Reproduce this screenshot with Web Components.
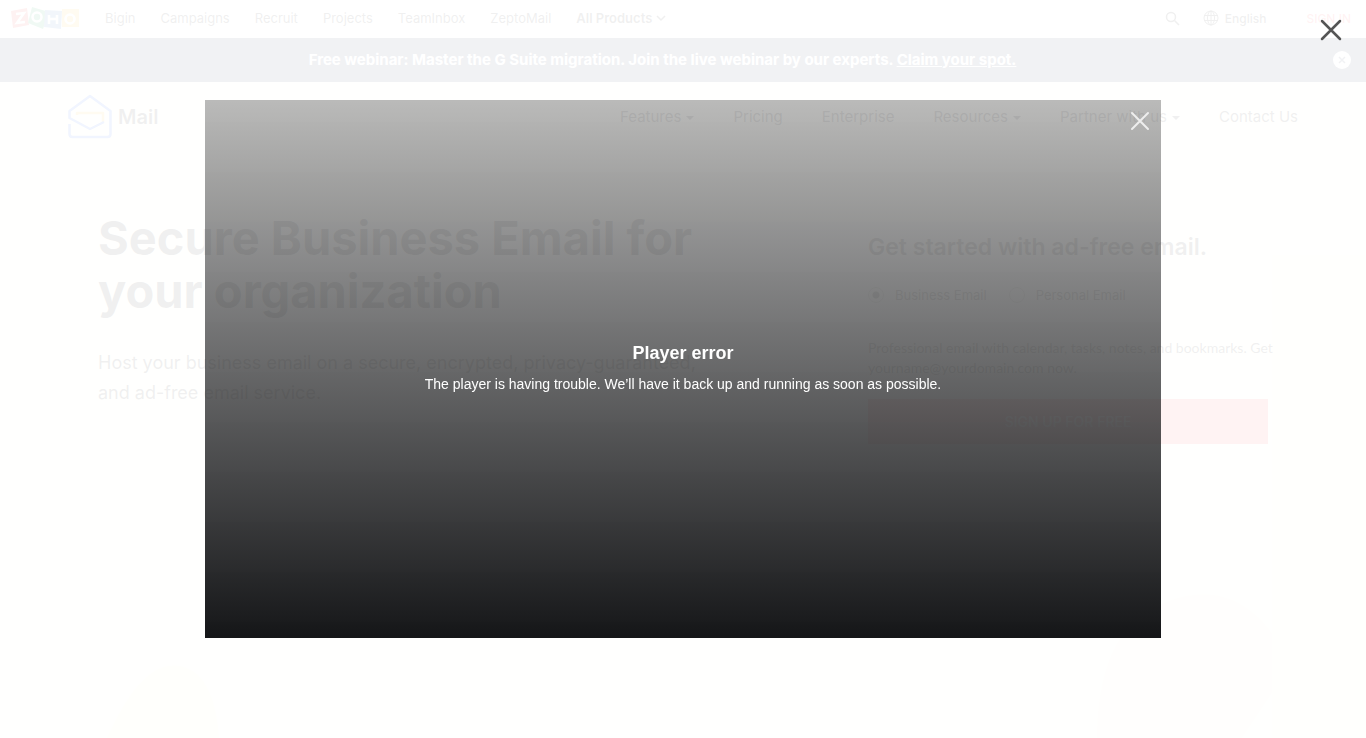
<!DOCTYPE html>
<html lang="en">
<head>
<meta charset="utf-8">
<title>Zoho Mail</title>
<style>
  html, body {
    margin: 0;
    height: 100%;
    overflow: hidden;
  }
  body {
    font-family: Inter, "Open Sans", sans-serif;
    color: #000;
    background: #ffffe4;
  }
</style>
</head>
<body>
<hero-art></hero-art>
<mail-topbar></mail-topbar>
<promo-banner>
  Free webinar: Master the G Suite migration. Join the live webinar by our experts.
  <a slot="action" href="#webinar">Claim your spot.</a>
</promo-banner>
<site-header></site-header>
<hero-section>
  <span slot="title">Secure Business Email for your organization</span>
  <span slot="text">Host your business email on a secure, encrypted, privacy-guaranteed, and ad-free email service.</span>
  <signup-form></signup-form>
</hero-section>
<video-modal>
  <player-error heading="Player error">The player is having trouble. We’ll have it back up and running as soon as possible.</player-error>
</video-modal>

<script>
// Pale shapes behind the page content
class HeroArt extends HTMLElement {
  constructor() {
    super();
    this.attachShadow({ mode: "open" });
    this.shadowRoot.innerHTML = `
      <style>
        :host {
          position: absolute;
          inset: 0;
          z-index: -1;
          display: flex;
          align-items: flex-end;
          justify-content: space-between;
          padding-left: 107px;
        }
        svg { display: block; }
      </style>
      <svg width="114" height="73" viewBox="0 0 114 73">
        <path d="M0 73C14 44 28 18 48 6c20-11 42-4 52 17 8 15 10 30 12 50z" fill="#fff0c0"/>
      </svg>
      <svg width="269" height="483" viewBox="0 0 269 483">
        <path d="M175 0h94v483h-94z" fill="#fff4d8"/>
        <path d="M0 483C0 420 18 368 62 350c40-18 80-16 113 28v60l-30 45z" fill="#ffeed8"/>
      </svg>`;
  }
}

class MailTopbar extends HTMLElement {
  constructor() {
    super();
    this.attachShadow({ mode: "open" });
    this.shadowRoot.innerHTML = `
      <style>
        :host {
          display: flex;
          align-items: center;
          justify-content: space-between;
          box-sizing: border-box;
          height: 38px;
          padding: 0 15px 2px 10px;
          background: #fff;
          font-size: 13px;
        }
        nav, .tools { display: flex; align-items: center; }
        nav { gap: 25px; }
        a { color: inherit; text-decoration: none; }
        svg { display: block; }
        .all { display: flex; align-items: center; gap: 4px; font-weight: 600; }
        button {
          display: flex;
          align-items: center;
          gap: 6px;
          padding: 0;
          border: 0;
          background: none;
          font: inherit;
          color: inherit;
        }
        .lang { margin-left: 23px; font-size: 12px; font-weight: 500; }
        .signin { margin-left: 40px; color: #f0373a; font-size: 12px; font-weight: 500; }
      </style>
      <nav>
        <a href="#home" aria-label="Zoho">
          <svg width="70" height="24" viewBox="0 0 70 24" fill="none">
            <path d="M1 5l16-3 2 17-16 3z" fill="#e42527"/>
            <path d="M22 1l17 5-6 17-15-6z" fill="#089949"/>
            <path d="M35 4l17 1-1 18-17-2z" fill="#226db4"/>
            <path d="M52 3h17v18H52z" fill="#f9b21d"/>
            <path d="M6 8l8-1-7 10 8-1M39 9v9m8-9v9m-8-5h8" stroke="#fff" stroke-width="2.5"/>
            <circle cx="27" cy="11" r="4.5" stroke="#fff" stroke-width="2.5"/>
            <circle cx="60" cy="13" r="4.5" stroke="#fff" stroke-width="2.5"/>
          </svg>
        </a>
        <a href="#bigin">Bigin</a>
        <a href="#campaigns">Campaigns</a>
        <a href="#recruit">Recruit</a>
        <a href="#projects">Projects</a>
        <a href="#teaminbox">TeamInbox</a>
        <a href="#zeptomail">ZeptoMail</a>
        <a class="all" href="#all">All Products
          <svg width="10" height="8" viewBox="0 0 10 8" fill="none" stroke="currentColor" stroke-width="1.5"><path d="M1 2l4 4 4-4"/></svg>
        </a>
      </nav>
      <div class="tools">
        <button aria-label="Search">
          <svg width="15" height="15" viewBox="0 0 15 15" fill="none" stroke="currentColor" stroke-width="1.5"><circle cx="6" cy="6" r="4.5"/><path d="M9.5 9.5L14 14"/></svg>
        </button>
        <button class="lang">
          <svg width="16" height="16" viewBox="0 0 16 16" fill="none" stroke="currentColor"><circle cx="8" cy="8" r="7"/><ellipse cx="8" cy="8" rx="3.5" ry="7"/><path d="M1 5.5h14M1 10.5h14M8 1v14"/></svg>
          English
        </button>
        <a class="signin" href="#signin">SIGN IN</a>
      </div>`;
  }
}

class PromoBanner extends HTMLElement {
  constructor() {
    super();
    this.attachShadow({ mode: "open" });
    this.shadowRoot.innerHTML = `
      <style>
        :host {
          display: flex;
          align-items: center;
          height: 44px;
          padding-right: 15px;
          background: #16284a;
          color: #fff;
          font-size: 15px;
          font-weight: 700;
        }
        p { flex: 1; margin: 0; padding-bottom: 2px; text-align: center; }
        ::slotted(a) { color: inherit; }
        button { display: flex; margin-left: 8px; padding: 0; border: 0; background: none; }
      </style>
      <p><slot></slot><slot name="action"></slot></p>
      <button aria-label="Dismiss">
        <svg width="18" height="18" viewBox="0 0 18 18"><circle cx="9" cy="9" r="9" fill="#fff"/><path d="M6 6l6 6m0-6l-6 6" stroke="#16284a" stroke-width="1.5"/></svg>
      </button>`;
  }
}

class SiteHeader extends HTMLElement {
  constructor() {
    super();
    this.attachShadow({ mode: "open" });
    this.shadowRoot.innerHTML = `
      <style>
        :host {
          display: flex;
          align-items: center;
          justify-content: space-between;
          height: 69px;
          padding: 0 68px;
          font-size: 15px;
        }
        a { display: flex; align-items: center; gap: 5px; color: inherit; text-decoration: none; }
        .brand { gap: 5px; font-size: 20px; font-weight: 600; }
        nav { display: flex; gap: 39px; }
        .menu::after {
          content: "";
          margin-top: 2px;
          border: 4px solid transparent;
          border-top-color: currentColor;
          border-bottom: 0;
        }
      </style>
      <a class="brand" href="#mail">
        <svg width="45" height="45" viewBox="0 0 45 45" fill="none" stroke-width="2.5" stroke-linejoin="round">
          <path d="M9 21V19h26v9" stroke="#f9b21d"/>
          <path d="M36 28L22 35 1.5 24v-7L22 2l20.500 15v23q0 3-3 3h-35q-3 0-3-3V30" stroke="#1456f0"/>
        </svg>
        Mail
      </a>
      <nav>
        <a class="menu" href="#features">Features</a>
        <a href="#pricing">Pricing</a>
        <a href="#enterprise">Enterprise</a>
        <a class="menu" href="#resources">Resources</a>
        <a class="menu" href="#partner">Partner with us</a>
        <a href="#contact">Contact Us</a>
      </nav>`;
  }
}

class HeroSection extends HTMLElement {
  constructor() {
    super();
    this.attachShadow({ mode: "open" });
    this.shadowRoot.innerHTML = `
      <style>
        :host {
          display: grid;
          grid-template-columns: minmax(0, 620px) 400px;
          justify-content: space-between;
          padding: 60px 98px 0;
        }
        h1 { margin: 0; font-size: 47px; line-height: 53px; }
        p { margin: 31px 0 0; font-size: 18px; line-height: 30px; }
      </style>
      <div>
        <h1><slot name="title"></slot></h1>
        <p><slot name="text"></slot></p>
      </div>
      <slot></slot>`;
  }
}

class SignupForm extends HTMLElement {
  constructor() {
    super();
    this.attachShadow({ mode: "open" });
    this.shadowRoot.innerHTML = `
      <style>
        :host { display: block; padding-top: 19px; font-size: 14px; }
        h2 { margin: 0; font-size: 23px; line-height: 34px; font-weight: 600; white-space: nowrap; }
        .choices { display: flex; gap: 22px; margin-top: 19px; font-size: 13px; line-height: 24px; }
        label { display: flex; align-items: center; gap: 11px; }
        input {
          appearance: none;
          box-sizing: border-box;
          width: 16px;
          height: 16px;
          margin: 0;
          border: 1px solid #888;
          border-radius: 50%;
        }
        input:checked { background: radial-gradient(#000 0 3px, transparent 4px); }
        p { margin: 31px -8px 21px 0; font-family: Lato, sans-serif; line-height: 20px; }
        button {
          width: 100%;
          height: 45px;
          padding: 0;
          border: 0;
          background: #f0373a;
          color: #fff;
          font: inherit;
          font-weight: 500;
        }
      </style>
      <form>
        <h2>Get started with ad-free email.</h2>
        <div class="choices">
          <label><input type="radio" name="plan" checked>Business Email</label>
          <label><input type="radio" name="plan">Personal Email</label>
        </div>
        <p>Professional email with calendar, tasks, notes, and bookmarks. Get yourname@yourdomain.com now.</p>
        <button type="button">SIGN UP FOR FREE</button>
      </form>`;
  }
}

class VideoModal extends HTMLElement {
  constructor() {
    super();
    this.attachShadow({ mode: "open" });
    this.shadowRoot.innerHTML = `
      <style>
        :host {
          position: fixed;
          inset: 0;
          display: grid;
          place-items: center;
          background: rgba(255, 255, 255, 0.94);
        }
        button {
          position: absolute;
          top: 19px;
          right: 24px;
          padding: 0;
          border: 0;
          background: none;
          color: #555;
        }
        svg { display: block; }
      </style>
      <slot></slot>
      <button aria-label="Close">
        <svg width="22" height="22" viewBox="0 0 22 22" stroke="currentColor" stroke-width="2.5" stroke-linecap="round"><path d="M2 2l18 18m0-18L2 20"/></svg>
      </button>`;
  }
}

class PlayerError extends HTMLElement {
  constructor() {
    super();
    this.attachShadow({ mode: "open" });
    this.shadowRoot.innerHTML = `
      <style>
        :host {
          position: relative;
          display: flex;
          flex-direction: column;
          align-items: center;
          justify-content: center;
          gap: 10px;
          box-sizing: border-box;
          width: 70%;
          aspect-ratio: 16 / 9;
          padding-bottom: 2px;
          background: linear-gradient(rgba(0, 0, 0, 0.27), rgba(18, 19, 21, 0.99));
          color: #fff;
          font-family: "Liberation Sans", Arial, sans-serif;
          font-size: 14px;
          line-height: 20px;
          text-align: center;
        }
        h3, p { margin: 0; }
        h3 { font-size: 18px; line-height: 22px; }
        button {
          position: absolute;
          top: 11px;
          right: 11px;
          padding: 0;
          border: 0;
          background: none;
          color: #eee;
        }
        svg { display: block; }
      </style>
      <h3></h3>
      <p><slot></slot></p>
      <button aria-label="Close player">
        <svg width="20" height="20" viewBox="0 0 20 20" stroke="currentColor" stroke-width="2" stroke-linecap="round"><path d="M2 2l16 16m0-16L2 18"/></svg>
      </button>`;
  }

  connectedCallback() {
    this.shadowRoot.querySelector("h3").textContent = this.getAttribute("heading");
  }
}

customElements.define("hero-art", HeroArt);
customElements.define("mail-topbar", MailTopbar);
customElements.define("promo-banner", PromoBanner);
customElements.define("site-header", SiteHeader);
customElements.define("hero-section", HeroSection);
customElements.define("signup-form", SignupForm);
customElements.define("video-modal", VideoModal);
customElements.define("player-error", PlayerError);
</script>
</body>
</html>
